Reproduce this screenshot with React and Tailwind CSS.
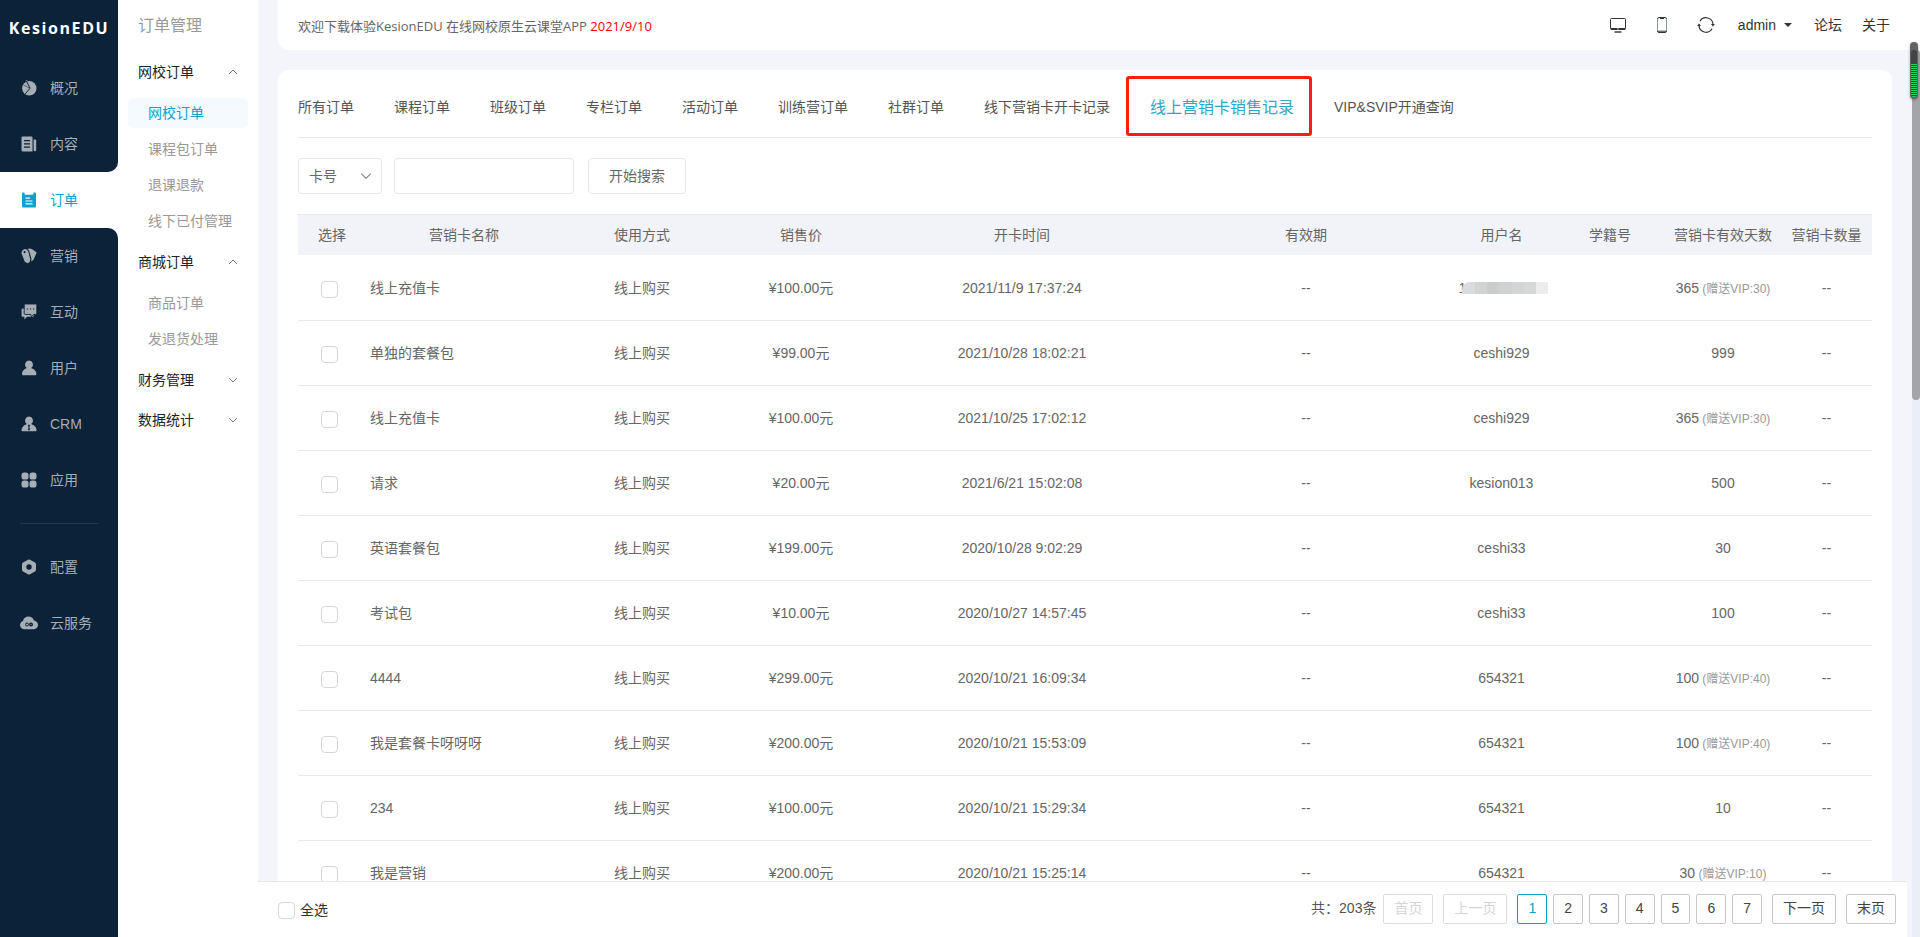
const navIcons = {
  pie: (
    <>
      <circle cx="8.3" cy="8.3" r="7.2" />
      <path d="M5 1.5 4.600 .2 7 0z" />
      <path d="M5.200 .6 9 8.200 4.200 14" fill="none" stroke="#0b2239" />
      <path d="M2.500 5 8.800 8.200" stroke="#0b2239" strokeWidth=".5" />
    </>
  ),
  news: (
    <>
      <path fillRule="evenodd" d="M1.5 .5h9a1 1 0 0 1 1 1V15.500H2A1.500 1.500 0 0 1 .5 14V1.500a1 1 0 0 1 1-1zM3 4v1.200h6V4zM3 7.200v1.200h6V7.200zM3 10.600v1.200h6v-1.200z" />
      <path d="M12.600 3.500h1.600a1 1 0 0 1 1 1V14a1.300 1.300 0 0 1-2.600 0z" />
    </>
  ),
  order: (
    <path fillRule="evenodd" d="M2 .6h1.500v1.200q.3 1 1.300 1h6.400q1 0 1.300-1V.6H14a1 1 0 0 1 1 1v12.900a1 1 0 0 1-1 1H2a1 1 0 0 1-1-1V1.600a1 1 0 0 1 1-1zM4.500 5.600v1.200h4.500V5.600zM4.500 8.400v1.200h7V8.400zM4.500 11.200v1.200h7v-1.200z" />
  ),
  tags: (
    <>
      <path fillRule="evenodd" d="M.4 5Q1 1.400 4 1q2.600.2 3.400 2.800l1.900 7.600q0 3-2.600 3.800Q5 14.800 3.800 13.800zM3.600 3a1.100 1.100 0 1 0 0 2.200 1.100 1.100 0 0 0 0-2.200z" />
      <path d="M6.600.9Q9-.2 11.200 1.300l4.500 3.300-3.200 7.200-2.200 1.800.1-2.800L8.400 3.400Q7.800 1.700 6.600.9z" />
    </>
  ),
  chat: (
    <>
      <path d="M1.600 4.500h10.200a1 1 0 0 1 1 1v6.300a1 1 0 0 1-1 1H6l-2.600 2.700v-2.700H1.600a1 1 0 0 1-1-1V5.500a1 1 0 0 1 1-1z" />
      <path d="M4.200 0h10.600a1 1 0 0 1 1 1v8.400a1 1 0 0 1-1 1h-2l-2.400 2.200-.6-2.200H4.200a1 1 0 0 1-1-1V1a1 1 0 0 1 1-1z" stroke="#0b2239" strokeWidth=".9" />
      <path d="M5.800 4.400h1.200v1.200H5.800zM8.900 4.400h1.200v1.200H8.900zM12 4.400h1.200v1.200H12z" fill="#0b2239" />
    </>
  ),
  user: (
    <path d="M8 .5a4 4 0 0 1 2.400 7.200v.6c3 .8 5 3 5 5.800a1.200 1.200 0 0 1-1.200 1.200H2.200A1.200 1.200 0 0 1 1 14.100c0-2.800 1.800-5 4.600-5.800v-.6A4 4 0 0 1 8 .5z" />
  ),
  crm: (
    <path fillRule="evenodd" d="M8 .5a4 4 0 0 1 2.400 7.200v.6c3 .8 5 3 5.200 5.800a1.200 1.200 0 0 1-1.200 1.200H1.700A1.200 1.200 0 0 1 .5 14.100c.2-2.800 2.300-5 5.100-5.800v-.6A4 4 0 0 1 8 .5zM7.300 8.800l-.3 1.200.6.800-.6 3.400h2l-.6-3.400.6-.8-.3-1.200z" />
  ),
  apps: (
    <>
      <rect x=".5" y=".5" width="7" height="7" rx="2.600" />
      <rect x="8.500" y=".5" width="7" height="7" rx="2.600" />
      <rect x=".5" y="8.500" width="7" height="7" rx="2.600" />
      <rect x="8.500" y="8.500" width="7" height="7" rx="2.600" />
    </>
  ),
  hex: (
    <path fillRule="evenodd" d="M7 .8a2 2 0 0 1 2 0l5 2.700a2 2 0 0 1 1 1.700v5.600a2 2 0 0 1-1 1.700l-5 2.700a2 2 0 0 1-2 0l-5-2.700a2 2 0 0 1-1-1.700V5.200a2 2 0 0 1 1-1.700zM8 5.300a2.700 2.700 0 1 0 0 5.400 2.700 2.700 0 0 0 0-5.400z" />
  ),
};

const mainNav = [
  ["概况", "pie"],
  ["内容", "news"],
  ["订单", "order"],
  ["营销", "tags"],
  ["互动", "chat"],
  ["用户", "user"],
  ["CRM", "crm"],
  ["应用", "apps"],
];

function NavIcon({ name }) {
  if (name === "cloud") {
    return (
      <svg className="-mx-px w-[18px] h-4 shrink-0" viewBox="0 0 18 16" fill="currentColor" aria-hidden="true">
        <path d="M8.500 1.500c2.600 0 4.700 1.600 5.400 4C16.200 5.900 18 7.700 18 9.900c0 2.500-2 4.300-4.500 4.300h-9C2 14.200 0 12.400 0 10c0-2 1.300-3.500 3-4.100.4-2.600 2.800-4.400 5.500-4.400z" />
        <circle cx="7" cy="9.500" r="1.500" fill="none" stroke="#0b2239" />
        <circle cx="11" cy="9.500" r="2" fill="#0b2239" />
        <circle cx="11" cy="9.500" r=".6" />
      </svg>
    );
  }
  return (
    <svg className="size-4 shrink-0" viewBox="0 0 16 16" fill="currentColor" aria-hidden="true">
      {navIcons[name]}
    </svg>
  );
}

function NavItem({ label, icon, state }) {
  const look =
    state === "active"
      ? "bg-white text-[#0aa1cd]"
      : state === "before"
        ? "bg-[#0b2239] text-[#a5adb5] rounded-br-[10px]"
        : state === "after"
          ? "bg-[#0b2239] text-[#a5adb5] rounded-tr-[10px]"
          : "bg-[#0b2239] text-[#a5adb5]";
  return (
    <a href="#" className={`flex h-14 items-center gap-[13px] pl-[21px] text-[14px] ${look}`}>
      <NavIcon name={icon} />
      {label}
    </a>
  );
}

function Chevron({ up, className }) {
  return (
    <svg className={className} viewBox="0 0 10 10" fill="none" stroke="currentColor" aria-hidden="true">
      <path d={up ? "M1 7l4-4 4 4" : "M1 3l4 4 4-4"} />
    </svg>
  );
}

function Group({ title, items, activeItem }) {
  const open = Boolean(items);
  return (
    <section>
      <button type="button" className="flex h-10 w-full items-center justify-between px-5 text-[14px] text-[#222]">
        {title}
        <Chevron up={open} className="size-[10px] text-[#777]" />
      </button>
      {open && (
        <ul className="mx-[10px] pt-[6px]">
          {items.map((t) => (
            <li key={t} className="pb-[6px]">
              <a
                href="#"
                className={`flex h-[30px] items-center rounded-[5px] pl-5 text-[14px] ${
                  t === activeItem ? "bg-[#f4fafd] text-[#0aa1cd]" : "text-[#999]"
                }`}
              >
                {t}
              </a>
            </li>
          ))}
        </ul>
      )}
    </section>
  );
}

const tabs = [
  "所有订单",
  "课程订单",
  "班级订单",
  "专栏订单",
  "活动订单",
  "训练营订单",
  "社群订单",
  "线下营销卡开卡记录",
  "线上营销卡销售记录",
  "VIP&SVIP开通查询",
];
const activeTab = "线上营销卡销售记录";

const columns = [
  ["选择", "w-[68px]"],
  ["营销卡名称", "w-[196px]"],
  ["使用方式", "w-[160px]"],
  ["销售价", "w-[158px]"],
  ["开卡时间", "w-[284px]"],
  ["有效期", "w-[284px]"],
  ["用户名", "w-[107px]"],
  ["学籍号", "w-[110px]"],
  ["营销卡有效天数", "w-[116px]"],
  ["营销卡数量", "w-[91px]"],
];

const rows = [
  ["线上充值卡", "100.00", "2021/11/9 17:37:24", null, "365", "30"],
  ["单独的套餐包", "99.00", "2021/10/28 18:02:21", "ceshi929", "999"],
  ["线上充值卡", "100.00", "2021/10/25 17:02:12", "ceshi929", "365", "30"],
  ["请求", "20.00", "2021/6/21 15:02:08", "kesion013", "500"],
  ["英语套餐包", "199.00", "2020/10/28 9:02:29", "ceshi33", "30"],
  ["考试包", "10.00", "2020/10/27 14:57:45", "ceshi33", "100"],
  ["4444", "299.00", "2020/10/21 16:09:34", "654321", "100", "40"],
  ["我是套餐卡呀呀呀", "200.00", "2020/10/21 15:53:09", "654321", "100", "40"],
  ["234", "100.00", "2020/10/21 15:29:34", "654321", "10"],
  ["我是营销", "200.00", "2020/10/21 15:25:14", "654321", "30", "10"],
];

const box =
  "block h-[17px] w-[17px] appearance-none rounded-[4px] border border-[#d2d8d8] bg-white checked:bg-[#0aa1cd]";

function MaskedName() {
  return (
    <span className="flex items-center justify-center pl-1">
      1
      <span className="-ml-1 flex h-3 w-[86px] overflow-hidden rounded-tl-lg">
        <span className="flex-1 bg-[#d9dcde]" />
        <span className="flex-1 bg-[#d2d3d5]" />
        <span className="flex-1 bg-[#cbccce]" />
        <span className="flex-1 bg-[#d0d1d3]" />
        <span className="flex-1 bg-[#d3d4d6]" />
        <span className="flex-1 bg-[#d6d7d9]" />
        <span className="flex-1 bg-[#ebecec]" />
      </span>
    </span>
  );
}

function PageButton({ label, kind }) {
  const look =
    kind === "active"
      ? "border-[#0aa1cd] text-[#0aa1cd]"
      : kind === "off"
        ? "border-[#ddd] text-[#d5d5d5]"
        : "border-[#c8c8c8] text-[#444]";
  return (
    <button
      type="button"
      disabled={kind === "off"}
      className={`h-[30px] rounded-[2px] border bg-white px-[10px] text-[14px] ${look}`}
    >
      {label}
    </button>
  );
}

export default function App() {
  return (
    <div className="flex h-screen overflow-hidden bg-[#f3f5fa] font-['Liberation_Sans','Noto_Sans_CJK_SC',sans-serif] text-[14px] text-[#666]">
      <aside className="flex w-[118px] shrink-0 flex-col bg-white">
        <div className="flex h-[60px] items-center justify-center bg-[#0b2239] pb-1 font-['Open_Sans',sans-serif] text-[16px] font-bold tracking-widest text-white">
          KesionEDU
        </div>
        <nav className="flex flex-1 flex-col">
          {mainNav.map(([label, icon], i) => (
            <NavItem
              key={label}
              label={label}
              icon={icon}
              state={i === 2 ? "active" : i === 1 ? "before" : i === 3 ? "after" : "normal"}
            />
          ))}
          <div className="flex-1 bg-[#0b2239]">
            <hr className="mx-5 my-[15px] border-[#233850]" />
            <NavItem label="配置" icon="hex" />
            <NavItem label="云服务" icon="cloud" />
          </div>
        </nav>
      </aside>

      <aside className="w-[140px] shrink-0 bg-white">
        <h1 className="flex h-[52px] items-center pl-5 text-[16px] text-[#999]">订单管理</h1>
        <Group title="网校订单" items={["网校订单", "课程包订单", "退课退款", "线下已付管理"]} activeItem="网校订单" />
        <Group title="商城订单" items={["商品订单", "发退货处理"]} />
        <Group title="财务管理" />
        <Group title="数据统计" />
      </aside>

      <div className="relative flex min-w-0 flex-1 flex-col">
        <header className="ml-5 flex h-[50px] shrink-0 items-center justify-between rounded-bl-[10px] bg-white pl-5 pr-[30px]">
          <p className="pt-1 font-['Open_Sans','Noto_Sans_CJK_SC',sans-serif] text-[13px]">
            欢迎下载体验KesionEDU 在线网校原生云课堂APP <span className="text-[#f00]">2021/9/10</span>
          </p>
          <div className="flex items-center text-[#333]">
            <button type="button" aria-label="电脑端" className="mr-7">
              <svg className="size-4" viewBox="0 0 16 16" fill="none" stroke="currentColor" aria-hidden="true">
                <rect x=".5" y="1.500" width="15" height="11" rx="1" />
                <path d="M1 12h14" strokeWidth="2" />
                <path d="M4.500 15h7" strokeWidth="1.400" />
                <circle cx="8" cy="12" r=".7" fill="#fff" stroke="none" />
              </svg>
            </button>
            <button type="button" aria-label="手机端" className="mr-7">
              <svg className="size-4" viewBox="0 0 16 16" fill="none" stroke="currentColor" aria-hidden="true">
                <path d="M3.500 2v12M12.500 2v12" stroke="#8a95a5" />
                <path d="M3.500 2Q3.500.5 5 .5h6q1.500 0 1.500 1.500M3.500 14q0 1.500 1.500 1.500h6q1.500 0 1.500-1.500" />
                <path d="M6 1.500h4M4 14.200h8" />
              </svg>
            </button>
            <button type="button" aria-label="刷新" className="mr-6">
              <svg className="size-4 overflow-visible" viewBox="0 0 16 16" fill="none" stroke="currentColor" strokeWidth="1.200" aria-hidden="true">
                <path d="M2 4.200A7 7 0 0 1 15 7.500M14 11.800A7 7 0 0 1 1 8.500" />
                <path d="M12.900 7h4L15 9.400zM-.9 9h4L1 6.600z" fill="currentColor" stroke="none" />
              </svg>
            </button>
            <button type="button" className="mr-[22px] flex items-center gap-2">
              admin
              <span className="border-x-4 border-t-4 border-x-transparent border-t-[#333]" />
            </button>
            <a href="#" className="mr-5">论坛</a>
            <a href="#">关于</a>
          </div>
        </header>

        <div className="flex min-h-0 flex-1">
          <div className="flex min-w-0 flex-1 flex-col">
            <main className="mx-5 mt-5 min-h-0 flex-1 overflow-hidden rounded-t-[10px] bg-white px-5">
              <nav className="flex h-[68px] items-center gap-10 border-b border-[#e8eaea] pt-2 text-[#555]">
                {tabs.map((t) =>
                  t === activeTab ? (
                    <a key={t} href="#" className="relative whitespace-nowrap text-[16px] leading-6 text-[#35a4bf]">
                      {t}
                      <span className="absolute -bottom-4 -left-6 -right-[18px] -top-5 rounded-[3px] border-3 border-[#ff1e0f]" />
                    </a>
                  ) : (
                    <a key={t} href="#" className="whitespace-nowrap">{t}</a>
                  ),
                )}
              </nav>

              <form className="flex items-center py-5" onSubmit={(e) => e.preventDefault()}>
                <div className="relative mr-3 w-[84px]">
                  <select
                    aria-label="搜索条件"
                    className="h-9 w-full appearance-none rounded-[4px] border border-[#e4e7e7] bg-white pl-[10px]"
                  >
                    <option>卡号</option>
                  </select>
                  <Chevron className="pointer-events-none absolute right-[10px] top-3 size-3 text-[#888]" />
                </div>
                <input
                  type="text"
                  aria-label="搜索内容"
                  className="mr-[14px] h-9 w-[180px] rounded-[4px] border border-[#e4e7e7] px-2"
                />
                <button type="submit" className="h-9 rounded-[4px] border border-[#e4e7e7] bg-white px-5">
                  开始搜索
                </button>
              </form>

              <table className="w-full table-fixed border-separate border-spacing-0 text-center">
                <thead>
                  <tr className="h-[42px]">
                    {columns.map(([name, width]) => (
                      <th
                        key={name}
                        scope="col"
                        className={`whitespace-nowrap border-b border-t border-b-white border-t-[#e6e9e9] bg-[#f2f3f8] p-0 font-normal ${width}`}
                      >
                        {name}
                      </th>
                    ))}
                  </tr>
                </thead>
                <tbody className="[&_td]:border-b [&_td]:border-[#e8eaea] [&_td]:p-0">
                  {rows.map(([name, price, time, user, days, vip], i) => (
                    <tr key={i} className="h-[65px]">
                      <td>
                        <input type="checkbox" aria-label={`选择 ${name}`} className={`${box} ml-[23px] mt-[2px]`} />
                      </td>
                      <td>
                        <div className="pl-1 text-left">{name}</div>
                      </td>
                      <td>线上购买</td>
                      <td>¥{price}元</td>
                      <td>{time}</td>
                      <td>--</td>
                      <td>{user ?? <MaskedName />}</td>
                      <td></td>
                      <td className="whitespace-nowrap">
                        {days}
                        {vip && <span className="text-[12px] text-[#999]"> (赠送VIP:{vip})</span>}
                      </td>
                      <td>--</td>
                    </tr>
                  ))}
                </tbody>
              </table>
            </main>

            <footer className="mr-[5px] flex h-14 shrink-0 items-center justify-between border-t border-[#e4e6ea] bg-white pl-5 pr-[11px]">
              <label className="flex items-center gap-[5px] pt-[2px] text-[#333]">
                <input type="checkbox" className={box} />
                全选
              </label>
              <div className="flex items-center gap-[10px] pb-[2px] text-[#555]">
                <div className="flex items-center gap-[7px]">
                  共：203条
                  <PageButton label="首页" kind="off" />
                </div>
                <PageButton label="上一页" kind="off" />
                <div className="flex gap-[6px]">
                  {["1", "2", "3", "4", "5", "6", "7"].map((n) => (
                    <PageButton key={n} label={n} kind={n === "1" ? "active" : "on"} />
                  ))}
                </div>
                <PageButton label="下一页" kind="on" />
                <PageButton label="末页" kind="on" />
              </div>
            </footer>
          </div>

          <div className="w-2 shrink-0 bg-[#e9eef7]">
            <div className="h-[350px] rounded-full bg-[#a3a5a9]" />
          </div>
        </div>

        <div className="absolute right-[2px] top-[42px] h-[57px] w-2 rounded-full bg-[#636365] px-px pb-[2px] pt-[8px] shadow-[0_1px_3px_rgba(0,0,0,0.3)]">
          <div className="h-[14px] rounded-t-full bg-[#434345]" />
          <div className="h-[33px] rounded-b-full bg-[repeating-linear-gradient(#22d35a_0px_1px,#2c4a35_1px_2px)]" />
        </div>
      </div>
    </div>
  );
}
